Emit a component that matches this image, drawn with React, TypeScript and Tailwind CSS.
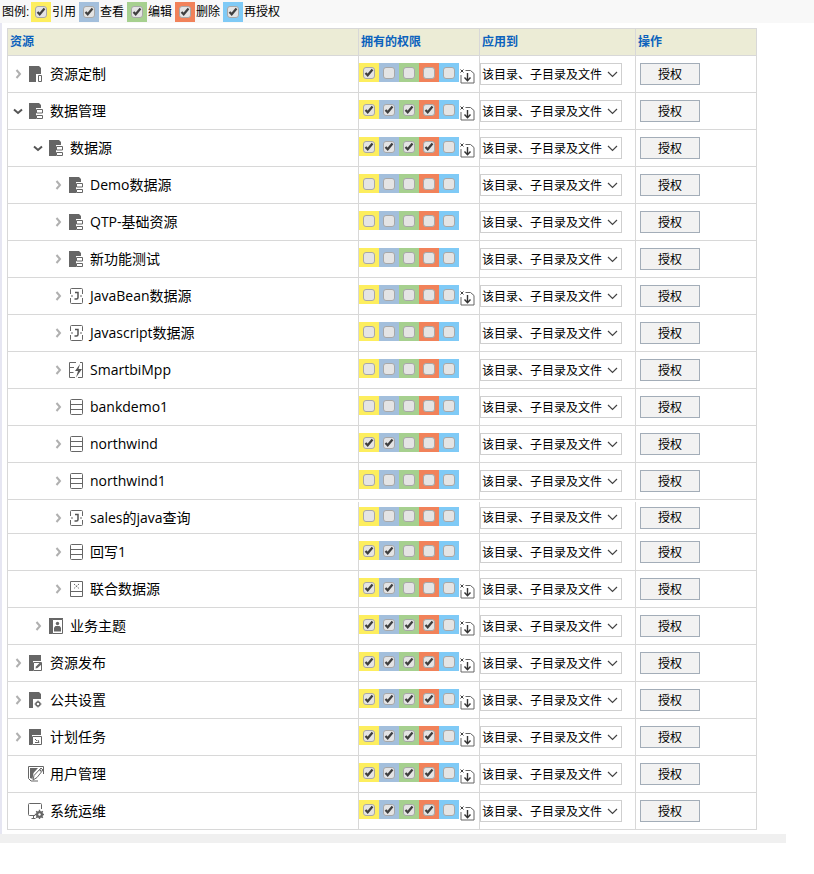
import { ReactNode } from "react";

const FONT = "font-['Open_Sans','Noto_Sans_CJK_SC',sans-serif]";
const SWATCHES = ["bg-[#fdee5e]", "bg-[#a3bfdc]", "bg-[#a6d08f]", "bg-[#f1825a]", "bg-[#7fcaf6]"];
const LEGEND = ["引用", "查看", "编辑", "删除", "再授权"];

const Folder = ({ d, children }: { d: string; children?: ReactNode }) => (
  <svg width="16" height="16" viewBox="0 0 16 16" className="shrink-0">
    <path d={d} fill="#666" />
    {children}
  </svg>
);

const line = { fill: "none", stroke: "#666", strokeWidth: 1 };

const Box = ({ children }: { children?: ReactNode }) => (
  <svg width="16" height="16" viewBox="0 0 16 16" className="shrink-0">
    <path d="M3.500.5h10q1 0 1 1v13q0 1-1 1h-10q-1 0-1-1v-13q0-1 1-1z" {...line} />
    {children}
  </svg>
);

const icons: Record<string, ReactNode> = {
  custom: (
    <Folder d="M1 0h10l2 2v6H8v8H1z">
      <path d="M10.500 9.500h3v6h-3z" {...line} />
    </Folder>
  ),
  manage: (
    <Folder d="M1 0h10l2 2v3H8v11H1z">
      <path d="M8.500 6.500h6V10h-6zM8.500 12.500h6v3h-6z" {...line} />
    </Folder>
  ),
  publish: (
    <Folder d="M1 0h12v6H5v10H1z">
      <path d="M5.500 7.500h8v8h-8z" {...line} />
      <path d="M7.500 13.500l.5-2 4-4 2 1.500-4.500 4z" fill="#666" />
    </Folder>
  ),
  settings: (
    <Folder d="M1 0h10l2 2v5H5v9H1z">
      <circle cx="10" cy="12" r="2" {...line} strokeWidth={1.400} />
      <path d="M10 8.500V10M10 14v1.500M6.500 12H8M12 12h1.500" {...line} />
    </Folder>
  ),
  schedule: (
    <Folder d="M1 0h12v6H4v10H1z">
      <path d="M4.500 7.500h9v8h-9z" {...line} />
      <path d="M7 10l2 2M7 13.500h4l-1-2.500" {...line} />
    </Folder>
  ),
  topic: (
    <svg width="16" height="16" viewBox="0 0 16 16" className="shrink-0">
      <path d="M1 0h14v1.500H4.500V16H1z" fill="#666" />
      <path d="M4.500 1.500h10v14h-10z" {...line} />
      <circle cx="9.500" cy="5.500" r="1.700" fill="#666" />
      <path d="M6 13.500V9.500L7.500 8h4L13 9.500v4z" fill="#666" />
    </svg>
  ),
  java: (
    <svg width="16" height="16" viewBox="0 0 16 16" className="shrink-0">
      <path d="M2.500 6V1.500q0-1 1-1h10q1 0 1 1V6M2.500 10v4.500q0 1 1 1h10q1 0 1-1V10" {...line} />
      <path d="M7 4.500h3v5q0 1.500-1.500 1.500H6.500" fill="none" stroke="#555" strokeWidth={1.500} />
      <path d="M3 8h2M12 8h2" {...line} />
    </svg>
  ),
  mpp: (
    <svg width="16" height="16" viewBox="0 0 16 16" className="shrink-0">
      <path d="M8 .5H1.500v15H7M1.500 5.500H6M1.500 10.500H5.500M12 .5h2.500v15H10" {...line} />
      <path d="M12 2L7 9h3l-2 6.500L14 7h-3.500z" fill="#555" />
    </svg>
  ),
  db: (
    <Box>
      <path d="M2.500 5.500h12M2.500 10.500h12" {...line} />
    </Box>
  ),
  union: (
    <svg width="16" height="16" viewBox="0 0 16 16" className="shrink-0">
      <path d="M2.500.5h12v15h-12zM2.500 10.500h12" {...line} />
      <path d="M6 3l5 4.500M11 3L6 7.500" {...line} strokeDasharray="1.500 1" />
    </svg>
  ),
  user: (
    <svg width="16" height="16" viewBox="0 0 16 16" className="shrink-0">
      <path d="M15.500 8V.5H.5v12L3 15h7" {...line} />
      <path d="M2 2h8L5.500 7l-1 6L2 12z" fill="#666" />
      <path d="M13 2l2 2-6 7.500-4 2.500 1-4.500z" fill="#fff" stroke="#666" />
      <circle cx="12.500" cy="4.500" r="1" fill="#666" />
    </svg>
  ),
  ops: (
    <svg width="16" height="16" viewBox="0 0 16 16" className="shrink-0">
      <path d="M7 12.500H1.500q-1 0-1-1v-10q0-1 1-1h11q1 0 1 1V6M3.500 15.500h4M5.500 12.500v3" {...line} />
      <circle cx="11.500" cy="11.500" r="3.500" fill="#666" />
      <path d="M11.500 6.800v9.400M6.800 11.500h9.400M8.200 8.200l6.600 6.600M14.800 8.200l-6.600 6.600" stroke="#666" strokeWidth={1.400} />
      <circle cx="11.500" cy="11.500" r="1.200" fill="#fff" />
    </svg>
  ),
};

const Check = ({ on }: { on: boolean }) => (
  <span className="flex h-3 w-3 items-center justify-center rounded-[3px] border border-[#a8a8a8] bg-[#e4e4e4]">
    {on && (
      <svg width="10" height="10" viewBox="0 0 10 10" className="shrink-0">
        <path d="M1.500 5l2.200 2.300L8.500 1.500" fill="none" stroke="#3f3f3f" strokeWidth={2.200} />
      </svg>
    )}
  </span>
);

const Swatch = ({ color, on, tall }: { color: string; on: boolean; tall?: boolean }) => (
  <span className={`flex w-5 items-center justify-center ${tall ? "h-5" : "h-[19px]"} ${color}`}>
    <Check on={on} />
  </span>
);

const Cascade = () => (
  <svg width="15" height="15" viewBox="0 0 15 15" className="block shrink-0">
    <path d="M.5.500l3 3M3.500.500l-3 3" stroke="#444" strokeWidth={1} />
    <path d="M5.500 1.500h5l3.500 3v9.500H1V6" fill="none" stroke="#666" strokeWidth={1} />
    <path d="M7.500 4v7.500M4.500 8.500l3 3.200 3-3.200" fill="none" stroke="#333" strokeWidth={1.400} />
  </svg>
);

type Row = {
  name: string;
  level: number;
  icon: string;
  arrow?: "open" | "closed";
  perms: number;
  cascade?: boolean;
  h?: string;
};

// perms: how many of the first four boxes are ticked
const rows: Row[] = [
  { name: "资源定制", level: 0, icon: "custom", arrow: "closed", perms: 1, cascade: true },
  { name: "数据管理", level: 0, icon: "manage", arrow: "open", perms: 4, cascade: true },
  { name: "数据源", level: 1, icon: "manage", arrow: "open", perms: 4, cascade: true },
  { name: "Demo数据源", level: 2, icon: "manage", arrow: "closed", perms: 0 },
  { name: "QTP-基础资源", level: 2, icon: "manage", arrow: "closed", perms: 0 },
  { name: "新功能测试", level: 2, icon: "manage", arrow: "closed", perms: 0 },
  { name: "JavaBean数据源", level: 2, icon: "java", arrow: "closed", perms: 0, cascade: true },
  { name: "Javascript数据源", level: 2, icon: "java", arrow: "closed", perms: 0 },
  { name: "SmartbiMpp", level: 2, icon: "mpp", arrow: "closed", perms: 0 },
  { name: "bankdemo1", level: 2, icon: "db", arrow: "closed", perms: 0 },
  { name: "northwind", level: 2, icon: "db", arrow: "closed", perms: 2 },
  { name: "northwind1", level: 2, icon: "db", arrow: "closed", perms: 0 },
  { name: "sales的java查询", level: 2, icon: "java", arrow: "closed", perms: 0, h: "h-[34px] pt-[2px]" },
  { name: "回写1", level: 2, icon: "db", arrow: "closed", perms: 2 },
  { name: "联合数据源", level: 2, icon: "union", arrow: "closed", perms: 2, cascade: true },
  { name: "业务主题", level: 1, icon: "topic", arrow: "closed", perms: 4, cascade: true },
  { name: "资源发布", level: 0, icon: "publish", arrow: "closed", perms: 4, cascade: true },
  { name: "公共设置", level: 0, icon: "settings", arrow: "closed", perms: 4, cascade: true },
  { name: "计划任务", level: 0, icon: "schedule", arrow: "closed", perms: 4, cascade: true },
  { name: "用户管理", level: 0, icon: "user", perms: 4, cascade: true },
  { name: "系统运维", level: 0, icon: "ops", perms: 4, cascade: true },
];

const indents = ["pl-[2px]", "pl-[22px]", "pl-[42px]"];

const Arrow = ({ kind }: { kind?: "open" | "closed" }) => (
  <span className="flex w-4 shrink-0 justify-center">
    {kind === "closed" && (
      <svg width="7" height="10" viewBox="0 0 7 10">
        <path d="M1.500 1L5 5 1.500 9" fill="none" stroke="#b0b0b0" strokeWidth={2} />
      </svg>
    )}
    {kind === "open" && (
      <svg width="10" height="7" viewBox="0 0 10 7">
        <path d="M1 1.500L5 5l4-3.500" fill="none" stroke="#555" strokeWidth={2} />
      </svg>
    )}
  </span>
);

const TreeRow = ({ row }: { row: Row }) => (
  <div className={`flex border-b border-[#d8d8d8] ${row.h ?? "h-[37px]"}`}>
    <div className={`flex w-[351px] items-center border-r border-[#d8d8d8] ${indents[row.level]}`}>
      <Arrow kind={row.arrow} />
      <span className="ml-[2px] flex w-4 shrink-0 justify-center">{icons[row.icon]}</span>
      <span className="ml-[6px] text-sm leading-none whitespace-nowrap text-black">{row.name}</span>
    </div>
    <div className="flex w-[121px] items-center border-r border-[#d8d8d8] pb-[3px]">
      {SWATCHES.map((color, i) => (
        <Swatch key={color} color={color} on={i < row.perms} />
      ))}
      {row.cascade && (
        <span className="mt-[8px] ml-[1px]">
          <Cascade />
        </span>
      )}
    </div>
    <div className="flex w-[156px] items-center border-r border-[#d8d8d8]">
      <div className="flex h-[22px] w-[142px] items-center justify-between border border-[#cfcfcf] bg-white pr-[3px] pl-[1px] text-xs leading-none whitespace-nowrap text-black">
        <span className="pt-[1px]">该目录、子目录及文件</span>
        <svg width="11" height="7" viewBox="0 0 11 7" className="shrink-0">
          <path d="M1 1l4.500 4.500L10 1" fill="none" stroke="#444" strokeWidth={1.200} />
        </svg>
      </div>
    </div>
    <div className="flex flex-1 items-center pl-[4px]">
      <button className="h-[22px] w-[60px] border border-[#a3adb8] bg-[#f2f2f2] pt-[1px] text-xs leading-none text-black">
        授权
      </button>
    </div>
  </div>
);

export default function App() {
  return (
    <div className={`h-[874px] w-[814px] overflow-hidden bg-white ${FONT}`}>
      <div className="flex h-[23px] items-center bg-[#f8f8f8] pl-[2px] text-xs leading-none text-black">
        <span className="w-[29px] font-['Liberation_Sans','Noto_Sans_CJK_SC',sans-serif]">图例:</span>
        {LEGEND.map((label, i) => (
          <span key={label} className="flex items-center gap-[1px] pr-[3px]">
            <Swatch color={SWATCHES[i]} on tall />
            <span>{label}</span>
          </span>
        ))}
      </div>
      <div className="border-l-2 border-[#e6e6f2] pt-[5px] pb-[4px] pl-[5px]">
        <div className="w-[750px] border-x border-[#d8d8d8]">
          <div className="flex h-[28px] border-y border-[#d8d8d8] bg-[#ececd6] text-xs leading-none font-bold text-[#0b62bd]">
            <div className="flex w-[351px] items-center border-r border-[#d8d8d8] pl-[2px]">资源</div>
            <div className="flex w-[121px] items-center border-r border-[#d8d8d8] pl-[2px]">拥有的权限</div>
            <div className="flex w-[156px] items-center border-r border-[#d8d8d8] pl-[2px]">应用到</div>
            <div className="flex flex-1 items-center pl-[2px]">操作</div>
          </div>
          {rows.map((row) => (
            <TreeRow key={row.name} row={row} />
          ))}
        </div>
      </div>
      <div className="h-[9px] w-[786px] bg-[#f0f0f0]" />
    </div>
  );
}
